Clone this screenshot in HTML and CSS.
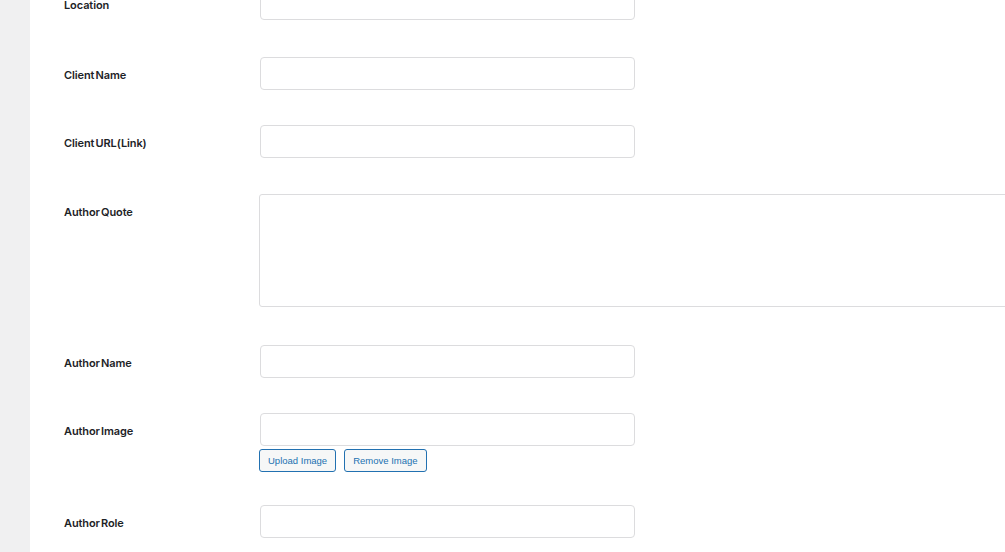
FILE: index.html
```html
<!DOCTYPE html>
<html lang="en">
<head>
    <meta charset="UTF-8">
    <meta name="viewport" content="width=device-width, initial-scale=1.0">
    <title>Project Details</title>
    <link rel="stylesheet" href="styles.css">
</head>
<body>
    <div class="admin-menu"></div>

    <div class="meta-box">
        <div class="field-row row-first">
            <label class="field-label" for="location">Location</label>
            <div class="field-control">
                <input type="text" id="location" class="field-input">
            </div>
        </div>

        <div class="field-row">
            <label class="field-label" for="client-name">Client Name</label>
            <div class="field-control">
                <input type="text" id="client-name" class="field-input">
            </div>
        </div>

        <div class="field-row row-before-textarea">
            <label class="field-label" for="client-url">Client URL(Link)</label>
            <div class="field-control">
                <input type="text" id="client-url" class="field-input">
            </div>
        </div>

        <div class="field-row row-textarea">
            <label class="field-label" for="author-quote">Author Quote</label>
            <div class="field-control">
                <textarea id="author-quote" class="field-textarea"></textarea>
            </div>
        </div>

        <div class="field-row">
            <label class="field-label" for="author-name">Author Name</label>
            <div class="field-control">
                <input type="text" id="author-name" class="field-input">
            </div>
        </div>

        <div class="field-row row-image">
            <label class="field-label" for="author-image">Author Image</label>
            <div class="field-control">
                <input type="text" id="author-image" class="field-input">
                <div class="image-actions">
                    <button type="button" class="small-btn">Upload Image</button>
                    <button type="button" class="small-btn">Remove Image</button>
                </div>
            </div>
        </div>

        <div class="field-row">
            <label class="field-label" for="author-role">Author Role</label>
            <div class="field-control">
                <input type="text" id="author-role" class="field-input">
            </div>
        </div>
    </div>
</body>
</html>
```

FILE: styles.css
```css
* {
    margin: 0;
    padding: 0;
    box-sizing: border-box;
}

html, body {
    height: 100%;
    overflow: hidden;
}

body {
    display: flex;
    background: #fff;
    color: #1d2327;
    font-family: Inter, 'Noto Sans', sans-serif;
}

.admin-menu {
    width: 30px;
    flex-shrink: 0;
    background: #f0f0f1;
}

.meta-box {
    flex: 1;
    padding-left: 34px;
    margin-top: -13px;
    background: #fff;
}

/* rows: 33px input + gap below */
.field-row {
    display: flex;
    align-items: flex-start;
    padding-bottom: 35px;
}

.row-first {
    padding-bottom: 37px;
}

.row-before-textarea {
    padding-bottom: 36px;
}

.row-textarea {
    padding-bottom: 38px;
}

.row-image {
    padding-bottom: 33px;
}

.field-label {
    width: 195px;
    flex-shrink: 0;
    padding-top: 12px;
    font-size: 11px;
    line-height: 13px;
    font-weight: 600;
    letter-spacing: -0.1px;
    word-spacing: -1.5px;
    color: #1d2327;
}

.field-control {
    flex: 1;
    min-width: 0;
}

.field-input {
    display: block;
    width: 375px;
    height: 33px;
    margin-left: 1px;
    border: 1px solid #dcdcde;
    border-radius: 4px;
    background: #fff;
    outline: none;
}

.field-textarea {
    display: block;
    width: 780px;
    height: 113px;
    border: 1px solid #dcdcde;
    border-radius: 3px;
    background: #fff;
    resize: none;
    outline: none;
}

.image-actions {
    display: flex;
    gap: 8px;
    margin-top: 3px;
}

.small-btn {
    height: 23px;
    padding: 0 8px;
    border: 1px solid #2271b1;
    border-radius: 3px;
    background: #f6f7f7;
    color: #2271b1;
    font-family: 'Liberation Sans', Arial, sans-serif;
    font-size: 9.5px;
    line-height: 21px;
    cursor: pointer;
}
```
